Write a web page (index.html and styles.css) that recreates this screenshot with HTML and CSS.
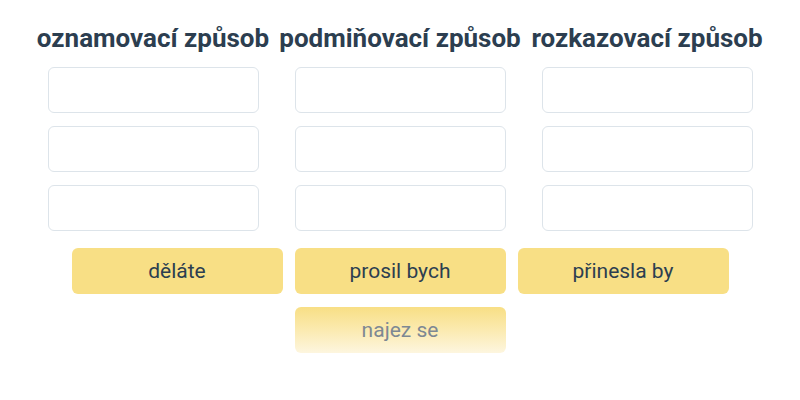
FILE: index.html
```html
<!DOCTYPE html>
<html lang="cs">
<head>
<meta charset="utf-8">
<link rel="stylesheet" href="styles.css">
</head>
<body>
<div class="page">
  <div class="columns">
    <div class="column">
      <h2 class="heading">oznamovací způsob</h2>
      <div class="slot"></div>
      <div class="slot"></div>
      <div class="slot"></div>
    </div>
    <div class="column">
      <h2 class="heading">podmiňovací způsob</h2>
      <div class="slot"></div>
      <div class="slot"></div>
      <div class="slot"></div>
    </div>
    <div class="column">
      <h2 class="heading">rozkazovací způsob</h2>
      <div class="slot"></div>
      <div class="slot"></div>
      <div class="slot"></div>
    </div>
  </div>
  <div class="chips">
    <div class="chip">děláte</div>
    <div class="chip">prosil bych</div>
    <div class="chip">přinesla by</div>
    <div class="chip chip-fading">najez se</div>
  </div>
</div>
</body>
</html>
```

FILE: styles.css
```css
html, body {
  margin: 0;
  padding: 0;
  background: #ffffff;
}
body {
  font-family: Roboto, "Liberation Sans", sans-serif;
  color: #2c3e50;
}
.page {
  width: 800px;
  height: 400px;
  padding-top: 23px;
  box-sizing: border-box;
}
.columns {
  display: flex;
  justify-content: center;
  gap: 36px;
}
.column {
  width: 211px;
  display: flex;
  flex-direction: column;
  align-items: center;
  gap: 13px;
}
.heading {
  margin: 0 -40px 1px;
  font-size: 26px;
  font-weight: 700;
  line-height: 30px;
  white-space: nowrap;
  text-align: center;
  color: #2c3e50;
}
.slot {
  width: 211px;
  height: 46px;
  box-sizing: border-box;
  border: 1px solid #dde4ea;
  border-radius: 6px;
  background: #fff;
}
.chips {
  width: 657px;
  margin: 17px auto 0;
  display: flex;
  flex-wrap: wrap;
  justify-content: center;
  gap: 13px 12px;
}
.chip {
  width: 211px;
  height: 46px;
  border-radius: 6px;
  background: #f8df85;
  display: flex;
  align-items: center;
  justify-content: center;
  font-size: 21px;
  color: #2c3e50;
}
.chip-fading {
  background: linear-gradient(to bottom, #f8df85 0%, #fbeab0 50%, #fdf6df 100%);
  color: #7d8893;
}
```
